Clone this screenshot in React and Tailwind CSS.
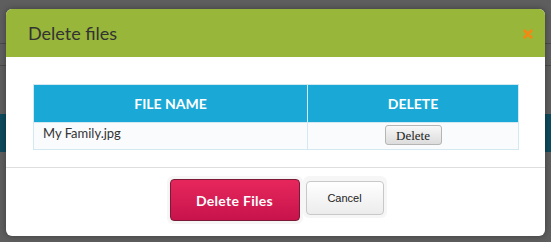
export default function App() {
  return (
    <div className="relative w-[551px] h-[242px] overflow-hidden bg-[#5e5e5e]" style={{ fontFamily: "Lato, 'Open Sans', sans-serif" }}>
      {/* background page (dimmed) */}
      <div className="flex flex-col">
        <div className="h-[44px] border-b border-[#4a4a4a]"></div>
        <div className="h-[22px] border-b border-[#4a4a4a]"></div>
        <div className="h-[48px]"></div>
        <div className="h-[38px] bg-[#0e4a5c]"></div>
      </div>

      {/* modal */}
      <div className="absolute left-[6px] top-[9px] w-[539px] h-[227px] bg-white rounded-[6px] overflow-hidden flex flex-col shadow-[0_0_6px_rgba(0,0,0,0.35)]">
        <div className="h-[48px] bg-[#97b63a] flex items-center justify-between pl-[22px] pr-[12px]">
          <span className="text-[18px] text-[#333] leading-none">Delete files</span>
          <svg width="10" height="10" viewBox="0 0 10 10" className="mt-[2px]">
            <path d="M1.8 1.8 L8.2 8.2 M8.2 1.8 L1.8 8.2" stroke="#f08a14" strokeWidth="3" strokeLinecap="round" />
          </svg>
        </div>
        <div className="h-[111px] border-b border-[#dedede] pt-[27px] px-[27px]">
          <table className="w-[486px] border-collapse text-[13px]">
            <thead>
              <tr className="h-[38px] bg-[#1aa9d6] text-white">
                <th className="w-[274px] border border-[#d3e9f1] font-bold text-[14px]">FILE NAME</th>
                <th className="border border-[#d3e9f1] font-bold text-[14px]">DELETE</th>
              </tr>
            </thead>
            <tbody>
              <tr className="h-[27px] bg-[#f9fbfd]">
                <td className="border border-[#d3e9f1] pl-[9px] text-[#333] text-[13px] align-top pt-[1px]">My Family.jpg</td>
                <td className="border border-[#d3e9f1] text-center align-top pt-[2px]">
                  <button className="h-[20px] w-[57px] rounded-[3px] border border-[#b5b5b5] bg-gradient-to-b from-[#f8f8f8] to-[#dcdcdc] text-[13px] text-[#222] leading-none" style={{ fontFamily: "'Liberation Serif', serif" }}>Delete</button>
                </td>
              </tr>
            </tbody>
          </table>
        </div>
        <div className="flex-1 flex items-start justify-center pt-[8px] pl-[2px]">
          <div className="p-[3px] bg-[#f6f6f6] rounded-[6px]">
            <button className="w-[130px] h-[42px] rounded-[4px] border border-[#7a1a36] bg-gradient-to-b from-[#e6275c] to-[#c8124c] text-white font-bold text-[14px] tracking-[0.3px]">Delete Files</button>
          </div>
          <div className="p-[3px] bg-[#f6f6f6] rounded-[6px]">
            <button className="mt-[2px] w-[78px] h-[34px] rounded-[4px] border border-[#c8c8c8] bg-gradient-to-b from-[#ffffff] to-[#ececec] text-[#222] text-[11px]" style={{ fontFamily: "'Liberation Sans', sans-serif" }}>Cancel</button>
          </div>
        </div>
      </div>
    </div>
  );
}
